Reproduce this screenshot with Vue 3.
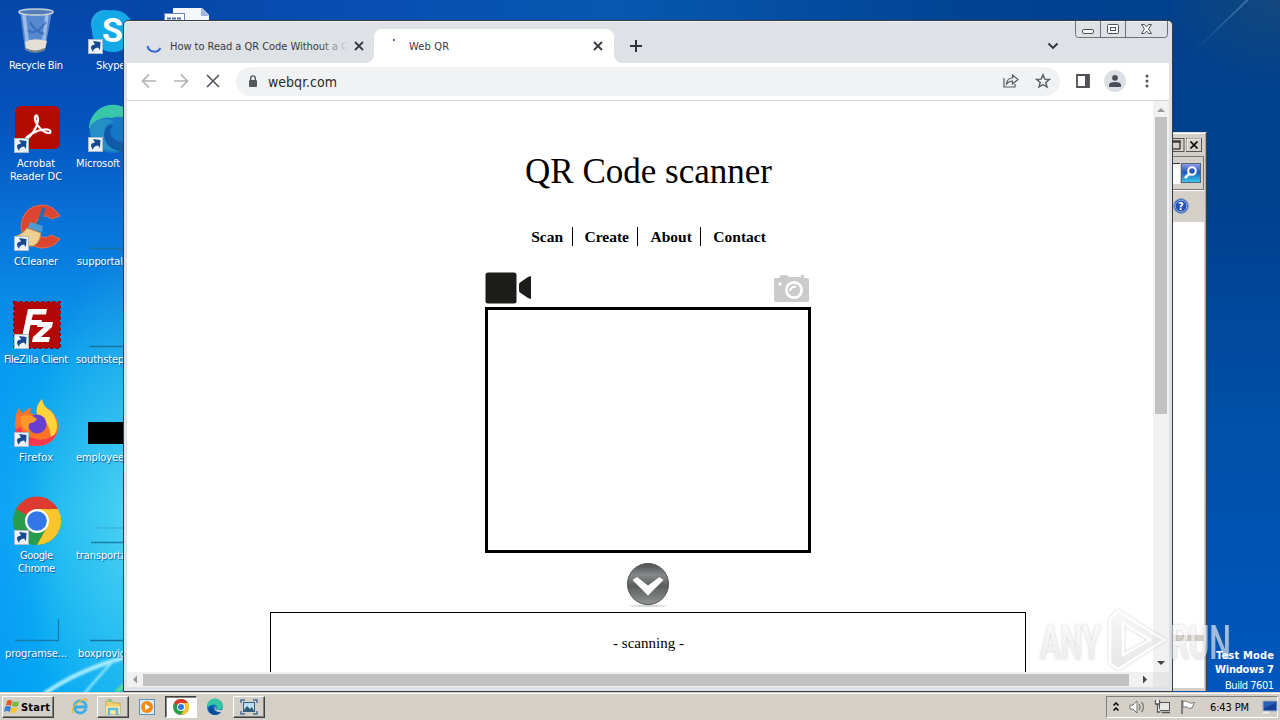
<script setup>
const colOne = [
  { id: 'bin', lines: ['Recycle Bin'], w: [54] },
  { id: 'acrobat', lines: ['Acrobat', 'Reader DC'], w: [38, 52], link: true },
  { id: 'ccleaner', lines: ['CCleaner'], w: [44], link: true },
  { id: 'filezilla', lines: ['FileZilla Client'], w: [64], link: true },
  { id: 'firefox', lines: ['Firefox'], w: [34], link: true },
  { id: 'chrome', lines: ['Google', 'Chrome'], w: [33, 37], link: true },
  { id: 'doc', lines: ['programse...'], w: [62] },
]
const colTwo = [
  { id: 'skype', label: 'Skype', link: true, pad: 20 },
  { id: 'edge', label: 'Microsoft Edge', link: true, pad: 0 },
  { id: 'line', label: 'supportal...', pad: 1 },
  { id: 'line', label: 'southstep...', pad: 0 },
  { id: 'black', label: 'employee...', pad: 0 },
  { id: 'faint', label: 'transporta...', pad: 0 },
  { id: 'line', label: 'boxprovid...', pad: 2 },
]
const menu = ['Scan', 'Create', 'About', 'Contact']
</script>

<template>
  <div class="screen">
    <svg class="wallpaper" width="1280" height="692" viewBox="0 0 1280 692">
      <defs>
        <filter id="soft"><feGaussianBlur stdDeviation="1.3" /></filter>
        <linearGradient id="ray" x1="0" y1="1" x2="1" y2="0"><stop offset="0" stop-color="#4ea5e6" stop-opacity="0" /><stop offset="1" stop-color="#5791bd" stop-opacity=".6" /></linearGradient>
      </defs>
      <g fill="none" filter="url(#soft)">
        <path d="M44 694 Q78 670 126 657" stroke="#a8edff" stroke-width="4" />
        <path d="M84 694 Q100 675 114 660" stroke="#8ee8fa" stroke-width="2.5" />
        <path d="M116 692 L126 684" stroke="#5fe08a" stroke-width="4" />
      </g>
      <path d="M1180 65 L1246 0 L1249 0 Z" fill="url(#ray)" />
    </svg>
    <svg class="docfile" width="50" height="14" viewBox="164 7 50 14">
      <path d="M173 21V8h29l7 7v6z" fill="#f5f7fb" /><path d="M201 8l8 8h-8z" fill="#9db4dc" />
      <rect x="164.500" y="13.500" width="20" height="8" fill="#fff" stroke="#6c86bd" /><path d="M167 18.500h15" stroke="#506ba8" stroke-width="2" stroke-dasharray="4 1" />
    </svg>

    <div class="icons first">
      <div v-for="i in colOne" :key="i.id" class="item">
        <svg width="52" height="48" viewBox="0 0 52 48">
          <g v-if="i.id === 'bin'">
            <path d="M11 3L16 42Q26 48 36 42L43 3z" fill="#8db4e6" opacity=".6" />
            <path d="M15 7l4 32M38 7l-4 31" stroke="#c9dcf6" stroke-width="3.500" opacity=".6" />
            <path d="M19 22q7 7 18-8M21 14q4 9 14 12" stroke="#2458b0" stroke-width="2" fill="none" opacity=".6" />
            <path d="M16 34q8-5 22-1l-2 8q-9 5-19 0z" fill="#e4dfd7" /><path d="M17 41q9 5 19 0" stroke="#777f83" stroke-width="2" fill="none" />
            <ellipse cx="27" cy="4" rx="17" ry="3" fill="#547db6" stroke="#c9d2da" stroke-width="1.500" />
          </g>
          <g v-else-if="i.id === 'acrobat'">
            <rect x="6" y="0" width="45" height="43" rx="6" fill="#b30b00" />
            <path d="M16 34C23 30 29 20 29 13Q28 7 26 11C25 17 34 28 41 27Q43 23 35 23.500C28 24 19 29 16 34Q15 37 18 33" fill="none" stroke="#fff" stroke-width="2.200" />
          </g>
          <g v-else-if="i.id === 'ccleaner'">
            <path d="M51 12Q44 1 33 1Q14 2 12 22Q13 42 32 44Q45 44 51 35L42 31Q38 35 33 33Q26 31 26 22Q28 13 34 12Q39 11 42 15z" fill="#dc4630" stroke="#eb6b4b" />
            <path d="M35 4L29 22" stroke="#216db2" stroke-width="3.500" /><path d="M21 18l13 4-1 6-14-4z" fill="#4c9bd4" />
            <path d="M18 24l14 5Q30 44 19 42L5 33Q14 30 18 24z" fill="#efcf90" stroke="#b79053" />
          </g>
          <g v-else-if="i.id === 'filezilla'">
            <rect x="5" y="0" width="46" height="46" fill="#b30707" stroke="#900606" stroke-width="2" stroke-dasharray="3 2.500" />
            <path d="M13 35L19 7H38L37 12.500H24L22.500 18H33L32 23H21.500L19 35z" fill="#fff" /><path d="M29 20H44L43 25L32 35H41L40 40H23L24 35L35 25H28z" fill="#fff" />
          </g>
          <g v-else-if="i.id === 'firefox'">
            <path d="M6 24Q6 14 10 8L13 13 22 7 21 13Q25 14 28 16Q26 6 33 -1Q34 7 41 10Q52 20 49 31Q44 46 28 46Q7 45 6 24z" fill="#ff7328" />
            <path d="M28 15Q26 6 33 -1Q34 7 42 11Q54 27 42 39Q41 21 28 15z" fill="#ffd53b" />
            <path d="M7 29Q9 46 28 46Q43 45 48 33Q35 43 24 38Q13 35 12 27z" fill="#f9374f" />
            <circle cx="28" cy="24" r="9.500" fill="#6840cf" /><path d="M11 17Q20 12 28 19Q26 23 21 23Q18 27 21 32Q12 30 11 17z" fill="#ff9829" />
          </g>
          <g v-else-if="i.id === 'chrome'">
            <circle cx="28" cy="23" r="24" fill="#299b4a" /><path d="M28 23L7 11A24 24 0 0 1 49 11z" fill="#dd3b30" /><path d="M28 11H49A24 24 0 0 1 28 47L38 29z" fill="#fbc62d" />
            <circle cx="28" cy="23" r="12" fill="#fff" /><circle cx="28" cy="23" r="9.800" fill="#3276e8" />
          </g>
          <path v-else d="M6 44.500H49.500V23" stroke="#167cac" stroke-width="1.300" fill="none" />
          <g v-if="i.link"><rect x="5.500" y="32.500" width="14" height="14" fill="#edf3f9" stroke="#aabccb" /><path d="M10 45Q5 38 12 37.500L10 34 17.500 35 17 43 15 40.500Q10 41 10 45z" fill="#174a8d" /></g>
        </svg>
        <div v-for="(l, n) in i.lines" :key="l" class="label">
          <svg :width="i.w[n] + 2" height="13"><text x="1" y="10" :textLength="i.w[n]">{{ l }}</text></svg>
        </div>
      </div>
    </div>

    <div class="icons second">
      <div v-for="i in colTwo" :key="i.label" class="item left">
        <svg width="52" height="48" viewBox="0 0 52 48">
          <g v-if="i.id === 'skype'"><circle cx="22" cy="16" r="14" fill="#23a9e4" /><circle cx="30" cy="23" r="21" fill="#13a8e7" /><text x="19" y="34" class="s">S</text></g>
          <g v-else-if="i.id === 'edge'"><circle cx="30" cy="23" r="24" fill="#1478c7" /><path d="M6 23A24 24 0 0 1 53 16Q38 8 29 12Q15 9 6 23z" fill="#38c8a9" /><path d="M7 20Q17 8 32 16Q23 16 21 26Q22 42 36 45Q16 46 9 34z" fill="#248ec6" /><path d="M30 19Q24 27 31 33Q40 40 51 32V46H40Q22 43 21 29Q22 18 30 19z" fill="#1059a6" /></g>
          <path v-else-if="i.id === 'line'" d="M7 44.500H50" stroke="#14749f" stroke-width="1.300" />
          <rect v-else-if="i.id === 'black'" x="5" y="22" width="44" height="22" fill="#000" />
          <g v-else><path d="M13 30h35" stroke="#35a9ce" /><path d="M8 44.500H50" stroke="#1681a9" stroke-width="1.300" /></g>
          <g v-if="i.link"><rect x="5.500" y="31.500" width="14" height="14" fill="#edf3f9" stroke="#aabccb" /><path d="M10 44Q5 37 12 36.500L10 33 17.500 34 17 42 15 39.500Q10 40 10 44z" fill="#174a8d" /></g>
        </svg>
        <div class="label" :class="'p' + i.pad">{{ i.label }}</div>
      </div>
    </div>

    <div class="build">
      <svg width="60" height="14"><text x="1" y="11" textLength="58" class="bold">Test Mode</text></svg>
      <svg width="61" height="14"><text x="1" y="11" textLength="59" class="bold">Windows 7</text></svg>
      <svg width="51" height="18"><text x="1" y="13" textLength="49">Build 7601</text></svg>
    </div>

    <div class="explorer">
      <div class="ex-title">
        <svg width="32" height="16"><rect x="-4" y=".5" width="15" height="13" fill="#d4d0c8" stroke="#555" /><path d="M-2 4H7V11H-2M-2 3H8" fill="none" stroke="#000" /><rect x="13.500" y=".5" width="15" height="13" fill="#d4d0c8" stroke="#555" /><path d="M14 13V1H28" stroke="#fff" fill="none" /><path d="M17.500 3.500l7 7M24.500 3.500l-7 7" stroke="#000" stroke-width="1.700" /></svg>
      </div>
      <div class="ex-search"><i></i>
        <svg width="20" height="20"><defs><linearGradient id="sg" x2="0" y2="1"><stop stop-color="#9a9deb" /><stop offset=".45" stop-color="#2059be" /><stop offset="1" stop-color="#39cdea" /></linearGradient></defs><rect x=".5" y=".5" width="19" height="19" fill="url(#sg)" stroke="#53657a" /><circle cx="11" cy="8" r="3.800" fill="#2b59b2" stroke="#fff" stroke-width="2" /><path d="M8 11L4 15" stroke="#fff" stroke-width="2.500" /></svg>
      </div>
      <div class="ex-help"><svg width="16" height="16"><circle cx="8" cy="8" r="7.300" fill="#2550b5" stroke="#7d98c5" /><circle cx="8" cy="8" r="5.800" fill="none" stroke="#8eb3ea" /><text x="5" y="12" fill="#fff" font-size="11" font-weight="bold">?</text></svg></div>
      <div class="ex-body"></div>
      <div class="ex-line"></div>
      <div class="ex-rest"></div>
    </div>

    <section class="window">
      <div class="tabs">
        <div class="tab back">
          <svg width="16" height="16"><path d="M1.500 8A7 7 0 0 0 14.500 10" fill="none" stroke="#3569d4" stroke-width="2" /></svg>
          <svg class="tt" width="178" height="18"><defs><linearGradient id="fade" gradientUnits="userSpaceOnUse" x1="150" x2="178" y1="0" y2="0"><stop stop-color="#36383c" /><stop offset="1" stop-color="#36383c" stop-opacity="0" /></linearGradient></defs><text x="0" y="13" textLength="178" fill="url(#fade)">How to Read a QR Code Without a C</text></svg>
          <svg class="x" width="10" height="10"><path d="M1 1l8 8M9 1l-8 8" stroke="#37393e" stroke-width="1.800" /></svg>
        </div>
        <div class="tab active">
          <i class="dot"></i>
          <svg class="tt" width="44" height="18"><text x="0" y="13" textLength="40" fill="#36383c">Web QR</text></svg>
          <svg class="x" width="10" height="10"><path d="M1 1l8 8M9 1l-8 8" stroke="#37393e" stroke-width="1.800" /></svg>
        </div>
        <svg class="plus" width="12" height="12"><path d="M6 0v12M0 6h12" stroke="#303238" stroke-width="2" /></svg>
        <svg class="more" width="12" height="8"><path d="M1.500 1.500L6 6l4.500-4.500" fill="none" stroke="#303238" stroke-width="1.900" /></svg>
      </div>
      <svg class="controls" width="94" height="19">
        <path d="M.5 0V13.500Q.5 16.500 3.500 16.500H89.500Q92.500 16.500 92.500 13.500V0M25.500 0V16.500M50.500 0V16.500" fill="none" stroke="#6d7075" />
        <g fill="#fff" stroke="#4d5055"><rect x="7.500" y="8.500" width="11" height="4" rx="1.500" /><rect x="32.500" y="3.500" width="11" height="9" rx="1" /><rect x="35.500" y="6.500" width="5" height="3" /><path d="M66.500 3.500h3l2 2.500 2-2.500h3l-3 4.500 3 4.500h-3l-2-2.500-2 2.500h-3l3-4.500z" /></g>
      </svg>
      <div class="toolbar">
        <svg width="16" height="16" class="nav"><path d="M15 8H2M8 1.500L1.500 8 8 14.500" /></svg>
        <svg width="16" height="16" class="nav"><path d="M1 8h13M8 1.500L14.500 8 8 14.500" /></svg>
        <svg width="16" height="16" class="nav stop"><path d="M2 2l12 12M14 2L2 14" /></svg>
        <div class="address">
          <svg width="10" height="13"><rect x="1" y="5" width="8" height="7" rx="1" fill="#54575c" /><path d="M2.700 5V3.200a2.300 2.300 0 0 1 4.600 0V5" fill="none" stroke="#54575c" stroke-width="1.400" /></svg>
          <svg class="url" width="72" height="20"><text x="0" y="16" textLength="69">webqr.com</text></svg>
          <svg class="share" width="16" height="16"><path d="M1 5V14H12V11M3.500 11Q4 5 9.500 5V2L15 6.500 9.500 11V8Q6 8 3.500 11z" fill="none" stroke="#56595e" stroke-width="1.200" /></svg>
          <svg class="star" width="16" height="16"><path d="M8 1.800l1.700 4.300 4.700.3-3.600 3 1.200 4.600L8 11.500 4 14l1.200-4.600-3.600-3 4.700-.3z" fill="none" stroke="#56595e" stroke-width="1.400" /></svg>
        </div>
        <svg width="14" height="14" class="panel"><path d="M1 1h12v12H1z" fill="none" stroke="#505257" stroke-width="1.800" /><path d="M9 1h4v12H9z" fill="#505257" /></svg>
        <svg width="22" height="22" class="avatar"><circle cx="11" cy="11" r="11" fill="#dce0e5" /><circle cx="11" cy="7.800" r="2.900" fill="#494e59" /><path d="M5 17v-2q0-3 6-3t6 3v2z" fill="#494e59" /></svg>
        <svg width="4" height="14"><g fill="#505257"><circle cx="2" cy="2" r="1.500" /><circle cx="2" cy="7" r="1.500" /><circle cx="2" cy="12" r="1.500" /></g></svg>
      </div>
      <div class="content">
        <main>
          <h1>QR Code scanner</h1>
          <nav><span v-for="m in menu" :key="m">{{ m }}</span></nav>
          <div class="modes">
            <svg width="47" height="32"><rect x=".5" y=".5" width="31" height="31" rx="2.500" fill="#1c1c1a" /><path d="M46 4V27L43 26L35 20.500Q34 20 34 18V13Q34 11 35 10.500L43 5z" fill="#1c1c1a" /></svg>
            <svg width="36" height="30"><path d="M1 5Q1 4 3 4H6Q7 1 10 1H12Q15 1 16 3H28V1H31V4H34Q36 4 36 6V26Q36 28 34 28H3Q1 28 1 26z" fill="#cbcbcb" /><circle cx="21" cy="16" r="7.700" fill="#cbcbcb" stroke="#fff" stroke-width="2.800" /><path d="M17 17Q18 12 23 13" stroke="#fff" stroke-width="2" fill="none" /><circle cx="7" cy="10" r="1.700" fill="#fff" /></svg>
          </div>
          <div class="camera"></div>
          <svg class="down" width="46" height="48"><defs><linearGradient id="dg" x2="0" y2="1"><stop stop-color="#4d4f50" /><stop offset=".28" stop-color="#858989" /><stop offset=".55" stop-color="#5b5d5d" /><stop offset="1" stop-color="#929595" /></linearGradient></defs><ellipse cx="23" cy="45" rx="19" ry="1.200" fill="#d8d8d8" /><circle cx="23" cy="23" r="20.500" fill="url(#dg)" stroke="#515354" /><path d="M7.500 19L12 16 23 24.500 34.500 16 38.500 19 23 34.500z" fill="#fff" /></svg>
          <div class="result">- scanning -</div>
        </main>
        <div class="vscroll"><svg width="16" height="16"><path d="M4 11l4-4 4 4z" fill="#999" /></svg><i></i><svg width="16" height="16"><path d="M4 5l4 4 4-4z" fill="#444" /></svg></div>
        <div class="hscroll"><svg width="16" height="15"><path d="M10 3.500L6 7.500l4 4z" fill="#999" /></svg><i></i><svg width="16" height="15"><path d="M6 3.500l4 4-4 4z" fill="#444" /></svg></div>
        <div class="corner"></div>
      </div>
    </section>

    <svg class="watermark" width="202" height="70" viewBox="0 0 202 70">
      <defs>
        <filter id="glow" x="-20%" y="-20%" width="140%" height="140%"><feDropShadow dx="0" dy="0" stdDeviation="1.800" flood-color="#555" flood-opacity=".5" /></filter>
        <linearGradient id="wm" x2="0" y2="1"><stop stop-color="#fff" /><stop offset="1" stop-color="#dcdcdc" /></linearGradient>
      </defs>
      <g filter="url(#glow)" fill="url(#wm)" opacity=".66">
        <text x="4" y="54" textLength="61" lengthAdjust="spacingAndGlyphs">ANY</text>
        <text x="134" y="54" textLength="61" lengthAdjust="spacingAndGlyphs">RUN</text>
        <path d="M74 14L82 6 128 35 82 64 74 58z M87 18V50L114 35z" fill-rule="evenodd" fill-opacity=".65" stroke="#fff" stroke-width="2.500" />
      </g>
    </svg>

    <footer class="taskbar">
      <div class="start"><svg width="16" height="16"><path d="M3 2Q6 0 8 2L7 7Q4 5 2 7z" fill="#e65324" /><path d="M9 2Q12 4 15 2L14 7Q11 8 8 7z" fill="#72b83d" /><path d="M1 8Q4 6 7 8L6 13Q3 11 0 13z" fill="#3c82d4" /><path d="M8 8Q11 10 14 8L12 13Q9 15 6 13z" fill="#f8c52c" /></svg><svg width="31" height="14"><text x="0" y="11" textLength="29">Start</text></svg></div>
      <div class="task ie"><svg width="18" height="18"><path d="M15 11A6 6 0 1 1 15 7V9H4" fill="none" stroke="#3aaee3" stroke-width="2.800" /><path d="M2 15Q-1 10 8 4Q17-2 16 4" fill="none" stroke="#e5bc3b" stroke-width="1.500" /></svg></div>
      <div class="task raised"><svg width="18" height="18"><path d="M2 3h6l1 2h7v11H2z" fill="#f2cf69" stroke="#cba84a" /><path d="M4 1h4v3H4z" fill="#87c783" /><path d="M2 8h14v8H2z" fill="#ffe99b" /><path d="M5 17V11H13V17" fill="none" stroke="#65bae1" stroke-width="2.500" /></svg></div>
      <div class="task"><svg width="18" height="18"><rect x="1.500" y="1.500" width="15" height="15" fill="#d8edf8" stroke="#5a94b9" /><circle cx="9" cy="9" r="6" fill="#f58a14" /><path d="M7 5.500L12 9l-5 3.500z" fill="#fff" /></svg></div>
      <div class="task pressed"><svg width="16" height="16" viewBox="3 -1 48 48"><circle cx="27" cy="23" r="24" fill="#299b4a" /><path d="M27 23L6 11A24 24 0 0 1 48 11z" fill="#dd3b30" /><path d="M27 11H48A24 24 0 0 1 27 47L37 29z" fill="#fbc62d" /><circle cx="27" cy="23" r="12" fill="#fff" /><circle cx="27" cy="23" r="9" fill="#3276e8" /></svg></div>
      <div class="task"><svg width="18" height="18"><circle cx="9" cy="9" r="8" fill="#136bc0" /><path d="M1 9A8 8 0 0 1 17 8Q17 12 12 12Q9 11 11 9Q10 4 1 9z" fill="#36c5a3" /><path d="M7 7Q5 12 11 14Q14 15 16 13Q10 20 4 15Q0 10 7 7z" fill="#094c9a" /><path d="M10 8Q8 12 12 12Q17 13 17 10V14Q12 15 9 12Q8 9 10 8z" fill="#d4d0c8" /></svg></div>
      <div class="task raised"><svg width="18" height="18"><path d="M1 5V2H5M13 2H17V5M17 13V16H13M5 16H1V13" fill="none" stroke="#476c9d" stroke-width="1.500" /><rect x="3.500" y="4.500" width="11" height="9" fill="#bcdff3" stroke="#355f8b" /><path d="M4 12l3-4 3 3 2-2 2 4H4z" fill="#325b72" /></svg></div>
      <div class="tray">
        <svg width="10" height="14"><path d="M2.500 5.500L5 3l2.500 2.500M2.500 10.500L5 8l2.500 2.500" fill="none" stroke="#000" stroke-width="1.500" /></svg>
        <svg width="17" height="16"><path d="M1 6h3l4-4v12l-4-4H1z" fill="#fff" stroke="#73716d" /><path d="M10 5q2 3 0 6M12.500 3q4 5 0 10" stroke="#7c7b77" fill="none" stroke-width="1.300" /></svg>
        <svg width="18" height="16"><rect x="5.500" y="3.500" width="10" height="8" fill="#e8e8e4" stroke="#555" /><path d="M8 13.500h8M1.500 1v4h4V1M3.500 5v8h3" stroke="#555" stroke-width="1.300" fill="#fff" /></svg>
        <svg width="17" height="16"><path d="M2 1v14" stroke="#666" stroke-width="1.500" /><path d="M3 2.500Q6 1 8.500 3.500Q11 5 14.500 3.500L12 9Q9 10 7.500 8.500Q6 7 3 8.500z" fill="#fff" stroke="#777" /></svg>
        <svg class="clock" width="42" height="14"><text x="1" y="11" textLength="39">6:43 PM</text></svg>
        <svg width="16" height="14"><path d="M1 1h14v10H1z" fill="#255fb3" stroke="#97aabf" /><path d="M2 8q7-2 12-6v8H2z" fill="#153f95" /><path d="M1 12.500h6" stroke="#eee" stroke-width="2" /></svg>
      </div>
    </footer>
  </div>
</template>

<style>
html, body { overflow: hidden; }
</style>
<style scoped>
* { box-sizing: border-box; }
svg { display: block; flex: none; }
.screen { position: relative; width: 1280px; height: 720px; overflow: hidden; font: 11px/13px "DejaVu Sans Condensed", "DejaVu Sans", sans-serif;
  background: radial-gradient(ellipse 110px 270px at 135px 520px, rgba(130,240,240,.5), rgba(110,235,245,0)), radial-gradient(ellipse 90px 300px at -30px 560px, rgba(0,120,250,.45), rgba(0,120,250,0)), radial-gradient(ellipse 130px 90px at 1280px 0, rgba(40,80,110,.5), rgba(30,80,120,0)), linear-gradient(180deg, #0546a8 0, #0553bd 120px, #0875db 230px, #08a0ef 370px, #16b5f2 510px, #04a8f3 692px) 0 0 / 640px 692px no-repeat, linear-gradient(180deg, #00408d, #00418e 200px, #004fa8 420px, #0057bd 692px); }
.screen::before { content: ""; position: absolute; left: 124px; top: 0; width: 1049px; height: 22px; background: linear-gradient(90deg, #0546a8, #0750b2 280px, #0757b0 500px, #004392 850px, #00418d); }
.wallpaper { position: absolute; left: 0; top: 0; }
.docfile { position: absolute; left: 164px; top: 7px; }
.icons { position: absolute; left: 0; top: 8px; width: 72px; display: grid; grid-auto-rows: 98px; color: #fff; }
.first .item > svg { margin-left: -3px; }
.second { left: 76px; width: 72px; }
.item { display: flex; flex-direction: column; align-items: center; }
.item > svg { margin-bottom: 3px; overflow: visible; }
.left { align-items: flex-start; }
.left > svg { margin-left: 7px; }
.label { height: 13px; white-space: nowrap; letter-spacing: -.1px; text-shadow: 1px 1px 1px #0754a4; }
.label text { fill: #fff; }
.p20 { padding-left: 20px; }
.p1 { padding-left: 1px; }
.p2 { padding-left: 2px; }
.s { font: bold 34px Roboto, sans-serif; fill: #fff; }
.build { position: absolute; right: 5px; top: 648px; fill: #fff; display: flex; flex-direction: column; align-items: flex-end; z-index: 4; }
.bold { font-weight: bold; }
.explorer { position: absolute; left: 1173px; top: 132px; width: 34px; height: 559px; background: #d4d0c8; border-right: 1px solid #404040; border-top: 1px solid #dedbd5; box-shadow: inset -1px 0 #aaa69f, inset 0 1px #fff; }
.ex-title { height: 23px; padding-top: 5px; overflow: hidden; }
.ex-search { display: flex; align-items: center; height: 34px; width: 31px; border: 1px solid #777; border-left: 0; gap: 1px; box-shadow: 0 1px #fff; }
.ex-search i { width: 7px; height: 21px; background: #fff; border-top: 1px solid #333; }
.ex-help { height: 32px; padding-top: 8px; }
.ex-body { width: 31px; height: 413px; background: #fff; }
.ex-line { height: 6px; background: #d4d0c8; }
.ex-rest { width: 31px; height: 47px; background: #fff; }
.window { position: absolute; left: 123px; top: 20px; width: 1050px; height: 672px; border: 1px solid #373d44; border-radius: 5px 5px 0 0; background: #dee1e6; padding: 0 3px 3px; box-shadow: inset 0 1px #f0f2f5; }
.tabs { display: flex; height: 42px; padding-top: 8px; align-items: stretch; }
.tab { display: flex; align-items: center; }
.back { width: 247px; padding-left: 19px; }
.tt { margin-left: 8px; margin-right: 6px; }
.tt text { font-size: 11px; }
.x { margin-left: auto; }
.back .x { margin: 0; }
.active { position: relative; width: 240px; background: #fff; border-radius: 8px 8px 0 0; padding: 0 11px 0 19px; }
.active::before, .active::after { content: ""; position: absolute; bottom: 0; width: 8px; height: 8px; }
.active::before { left: -8px; background: radial-gradient(circle at 0 0, transparent 7.500px, #fff 8px); }
.active::after { right: -8px; background: radial-gradient(circle at 100% 0, transparent 7.500px, #fff 8px); }
.dot { width: 2px; height: 2px; background: #5270b5; margin-bottom: 13px; }
.active .tt { margin-left: 14px; }
.plus { align-self: center; margin-left: 16px; }
.more { align-self: center; margin-left: auto; margin-right: 110px; }
.controls { position: absolute; left: 951px; top: 0; }
.toolbar { display: flex; align-items: center; height: 38px; background: #fff; border-bottom: 1px solid #d5d6d8; padding-left: 14px; }
.toolbar > svg, .address > svg { margin-bottom: 1px; }
.nav { fill: none; stroke: #b0b1b4; stroke-width: 1.700; margin-right: 16px; }
.stop { stroke: #55585d; margin-right: 15px; }
.address { display: flex; align-items: center; width: 824px; height: 29px; border-radius: 15px; background: #f0f2f4; padding-left: 12px; }
.url { margin-left: 10px; }
.url text { font-size: 14px; fill: #292b2f; }
.share { margin-left: auto; margin-right: 16px; }
.star { margin-right: 9px; }
.panel { margin-left: 16px; }
.avatar { margin: 0 19px 0 14px; }
.content { display: grid; grid-template: 571px 15px / 1026px 16px; background: #fff; }
main { overflow: hidden; padding-top: 49px; display: flex; flex-direction: column; align-items: center; font-family: "Liberation Serif", serif; color: #000; padding-left: 16px; }
h1 { font-size: 35px; font-weight: normal; line-height: 44px; margin: 0; padding-left: 1px; white-space: nowrap; }
nav { display: flex; height: 19px; margin-top: 33px; font-size: 15.500px; font-weight: bold; line-height: 20px; padding-left: 1px; }
nav span { padding: 0 8.500px 0 12px; border-right: 1px solid #000; }
nav span:first-child { padding-left: 0; }
nav span:last-child { border: 0; padding-right: 0; }
.modes { width: 326px; display: flex; justify-content: space-between; margin-top: 26px; height: 35px; flex: none; padding-right: 2px; }
.modes svg:last-child { margin-top: 2px; }
.camera { width: 326px; height: 246px; flex: none; border: 3px solid #000; }
.down { margin-top: 8px; }
.result { width: 756px; height: 80px; flex: none; margin-top: 3px; border: 1px solid #000; text-align: center; font-size: 15px; line-height: 17px; padding: 22px 0 0 1px; }
.vscroll { display: flex; flex-direction: column; background: #f1f1f1; }
.vscroll i { width: 12px; height: 297px; background: #c1c1c1; margin: 0 2px auto; }
.hscroll { display: flex; align-items: center; background: #f1f1f1; }
.hscroll i { height: 12px; width: 986px; background: #c1c1c1; }
.hscroll svg:last-child { margin-left: auto; }
.corner { background: #e6e6e6; }
.watermark { position: absolute; left: 1036px; top: 605px; z-index: 3; overflow: visible; }
.watermark text { font: 500 49px Roboto, sans-serif; }
.taskbar { position: absolute; left: 0; bottom: 0; width: 1280px; height: 28px; display: flex; align-items: flex-start; padding: 3px 2px 0; background: #d4d0c8; border-top: 1px solid #d4d0c8; box-shadow: inset 0 1px #fff; }
.start, .raised { border: 1px solid; border-color: #fff #404040 #404040 #fff; box-shadow: inset -1px -1px #808080; }
.start { display: flex; align-items: center; width: 52px; height: 22px; gap: 1px; padding-left: 1px; margin-right: 11px; }
.start text { font: bold 11px "DejaVu Sans Condensed", sans-serif; }
.task { width: 32px; height: 22px; display: flex; align-items: center; justify-content: center; margin-right: 2px; }
.ie { width: 30px; }
.pressed { background: #fff; border: 1px solid; border-color: #404040 #fff #fff #404040; box-shadow: inset 1px 1px #808080; }
.tray { display: flex; align-items: center; width: 172px; height: 22px; margin-left: auto; border: 1px solid; border-color: #808080 #fff #fff #808080; padding: 0 2px 0 4px; gap: 8px; }
.clock { margin-left: 4px; }
.tray svg:last-child { margin-left: 3px; }
</style>
